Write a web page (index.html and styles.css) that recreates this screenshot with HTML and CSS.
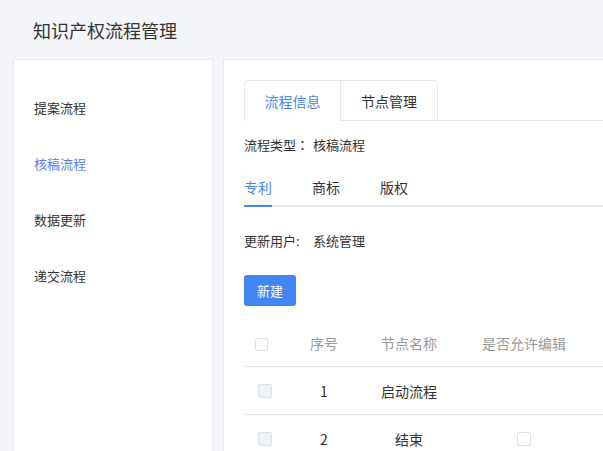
FILE: index.html
```html
<!DOCTYPE html>
<html lang="zh">
<head>
<meta charset="utf-8">
<link rel="stylesheet" href="styles.css">
</head>
<body>
<header class="header"><h1 class="title">知识产权流程管理</h1></header>
<div class="main">
  <aside class="sidebar">
    <div class="menu-item">提案流程</div>
    <div class="menu-item active">核稿流程</div>
    <div class="menu-item">数据更新</div>
    <div class="menu-item">递交流程</div>
  </aside>
  <section class="content">
    <div class="tabs">
      <div class="tab active">流程信息</div>
      <div class="tab">节点管理</div>
      <div class="tab-rest"></div>
    </div>
    <div class="type-line">流程类型<span class="colon" lang="ja">：</span>核稿流程</div>
    <div class="subtabs">
      <div class="subtab active">专利</div>
      <div class="subtab">商标</div>
      <div class="subtab">版权</div>
    </div>
    <div class="user-line"><span class="user-label">更新用户:</span><span>系统管理</span></div>
    <button class="btn">新建</button>
    <div class="table">
      <div class="row head">
        <div class="c c1"><span class="cb cb-head"></span></div>
        <div class="c c2">序号</div>
        <div class="c c3">节点名称</div>
        <div class="c c4">是否允许编辑</div>
      </div>
      <div class="row">
        <div class="c c1"><span class="cb cb-row"></span></div>
        <div class="c c2">1</div>
        <div class="c c3">启动流程</div>
        <div class="c c4"></div>
      </div>
      <div class="row">
        <div class="c c1"><span class="cb cb-row"></span></div>
        <div class="c c2">2</div>
        <div class="c c3">结束</div>
        <div class="c c4"><span class="cb cb-white"></span></div>
      </div>
    </div>
  </section>
</div>
</body>
</html>
```
FILE: styles.css
```css
* { box-sizing: border-box; }
html, body { margin: 0; padding: 0; }
body {
  background: #f4f5f9;
  font-family: "Noto Sans CJK SC", "Noto Sans", "Liberation Sans", sans-serif;
  color: #333;
  width: 603px;
  height: 451px;
  overflow: hidden;
}
.header { height: 59px; padding-left: 33px; display: flex; align-items: center; }
.title { margin: 0; font-size: 18px; font-weight: 400; color: #333; line-height: 24px; padding-top: 1px; }
.main { display: flex; gap: 10px; padding-left: 13px; height: 392px; overflow: hidden; }
.sidebar {
  width: 200px; height: 392px; flex: none;
  background: #fff; border: 1px solid #e6e8ee; border-bottom: none;
  padding-top: 20px;
}
.menu-item { height: 56px; line-height: 56px; padding-left: 20px; font-size: 13px; color: #333; }
.menu-item.active { color: #5a7ff0; }
.content {
  width: 380px; flex: none; height: 392px; overflow: hidden;
  background: #fff; border: 1px solid #e6e8ee; border-right: none; border-bottom: none;
  padding: 20px 0 0 20px;
}
.tabs { display: flex; height: 41px; }
.tab {
  width: 97px; height: 41px; font-size: 14px; line-height: 40px; text-align: center;
  border: 1px solid #e4e7ed; border-left: none; border-bottom: 1px solid #e4e7ed;
}
.tab:first-child { border-left: 1px solid #e4e7ed; border-top-left-radius: 4px; }
.tab:nth-child(2) { border-top-right-radius: 4px; }
.tab.active { color: #4a86e8; border-bottom-color: #fff; }
.tab-rest { flex: 1; border-bottom: 1px solid #e4e7ed; }
.type-line { margin-top: 14px; font-size: 13px; line-height: 20px; }
.colon { font-family: "Noto Sans CJK JP", sans-serif; margin-right: 4px; }
.subtabs { display: flex; gap: 40px; margin-top: 22px; border-bottom: 2px solid #e4e7ed; }
.subtab { font-size: 14px; line-height: 20px; padding-bottom: 8px; margin-bottom: -2px; border-bottom: 2px solid transparent; }
.subtab.active { color: #4a86e8; border-bottom-color: #4285f4; }
.user-line { margin-top: 24px; font-size: 13px; line-height: 20px; display: flex; }
.user-label { width: 69px; }
.btn {
  margin-top: 24px; display: block;
  width: 52px; height: 31px; border: none; border-radius: 3px;
  background: #4285f4; color: #fff; font-family: inherit; font-size: 13px; padding: 0;
}
.table { margin-top: 13px; }
.row { display: flex; height: 48px; align-items: center; border-bottom: 1px solid #e6e8ee; font-size: 14px; }
.row.head { height: 48px; color: #999; }
.c { text-align: center; }
.c1 { width: 50px; text-align: left; display: flex; align-items: center; }
.c2 { width: 60px; }
.c3 { width: 110px; }
.c4 { width: 120px; display: flex; justify-content: center; align-items: center; }
.cb { display: inline-block; width: 14px; height: 14px; border: 1px solid #dcdfe6; border-radius: 2px; background: #fff; }
.cb-head { margin-left: 11px; width: 13px; height: 13px; margin-top: 3px; }
.cb-row { margin-left: 14px; background: #edf1fa; }
.cb-white { margin-top: 1px; }
```
